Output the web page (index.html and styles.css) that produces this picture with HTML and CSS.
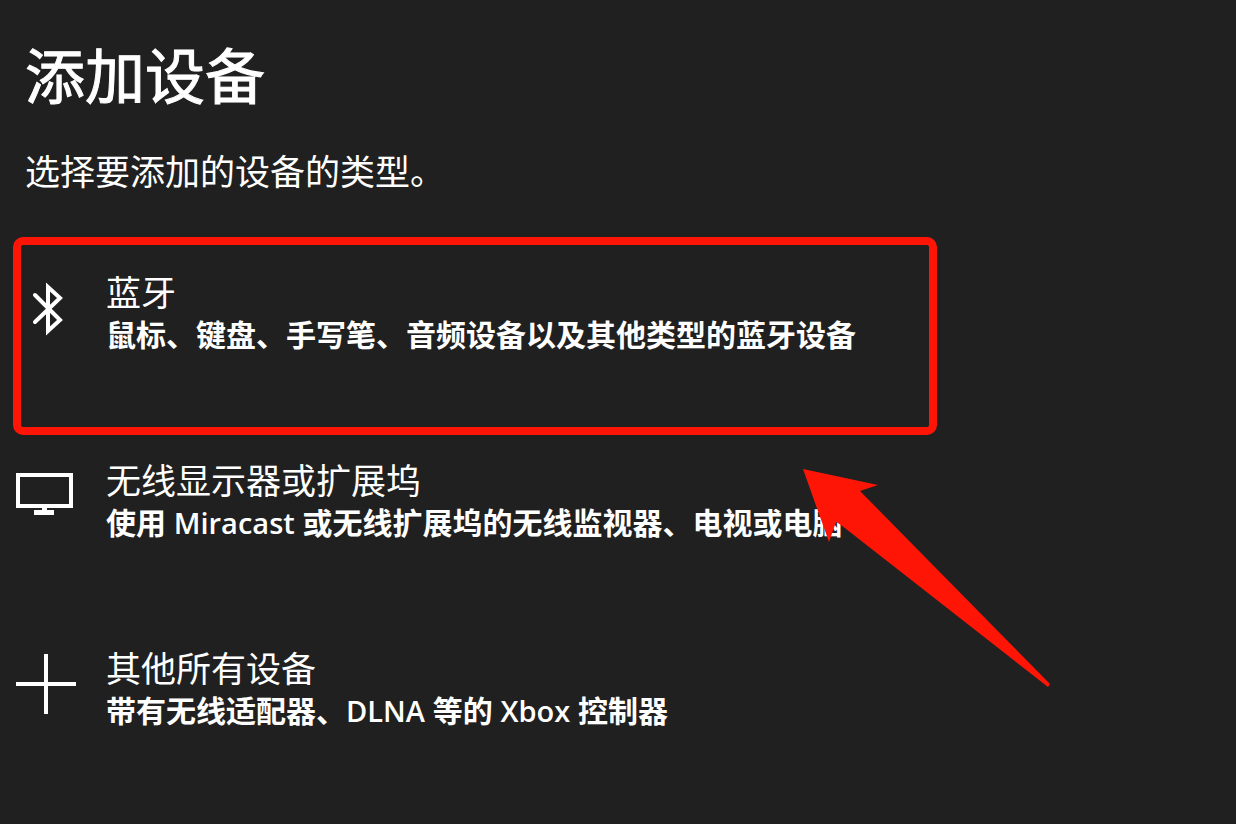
FILE: index.html
```html
<!DOCTYPE html>
<html lang="zh-CN">
<head>
<meta charset="utf-8">
<meta name="viewport" content="width=device-width, initial-scale=1">
<title>添加设备</title>
<link rel="stylesheet" href="styles.css">
</head>
<body>
<main class="dialog">
  <h1 class="dialog-title">添加设备</h1>
  <p class="dialog-lead">选择要添加的设备的类型。</p>
  <div class="device-list">
    <button type="button" class="device device-marked">
      <svg class="device-icon" viewBox="0 0 60 60" aria-hidden="true">
        <path d="M19 17 44 42 32 53V9L44 20 19 44" fill="none" stroke="currentColor" stroke-width="4" stroke-linecap="round"/>
      </svg>
      <span class="device-text">
        <span class="device-name">蓝牙</span>
        <span class="device-desc">鼠标、键盘、手写笔、音频设备以及其他类型的蓝牙设备</span>
      </span>
    </button>
    <button type="button" class="device">
      <svg class="device-icon" viewBox="0 0 60 60" aria-hidden="true">
        <path d="M2 9H55V40H2Z" fill="none" stroke="currentColor" stroke-width="4"/>
        <path d="M26 41h5v3h7v5H18v-5h8z" fill="currentColor"/>
      </svg>
      <span class="device-text">
        <span class="device-name">无线显示器或扩展坞</span>
        <span class="device-desc">使用 <span class="latin">Miracast</span> 或无线扩展坞的无线监视器、电视或电脑</span>
      </span>
    </button>
    <button type="button" class="device">
      <svg class="device-icon" viewBox="0 0 60 60" aria-hidden="true">
        <path d="M30 0V60M0 30H60" fill="none" stroke="currentColor" stroke-width="4"/>
      </svg>
      <span class="device-text">
        <span class="device-name">其他所有设备</span>
        <span class="device-desc">带有无线适配器、<span class="latin">DLNA</span> 等的 <span class="latin">Xbox</span> 控制器</span>
      </span>
    </button>
    <svg class="pointer" viewBox="0 0 248 219" aria-hidden="true">
      <path d="M0 0 75 16 57 22 247 215 245 218 38 56 33 53 26 73Z" fill="currentColor"/>
    </svg>
  </div>
</main>
</body>
</html>
```
FILE: styles.css
```css
* {
  box-sizing: border-box;
}

body {
  margin: 0;
  min-height: 100vh;
  background: #202020;
  color: #fff;
  font-family: "Open Sans", "Noto Sans CJK SC", sans-serif;
}

.dialog {
  padding: 36px 16px 16px;
}

.dialog-title,
.dialog-lead {
  margin: 0;
  padding-left: 9px;
  font-weight: 400;
}

.dialog-title {
  font-size: 60px;
  line-height: 80px;
  -webkit-text-stroke: 1px currentColor;
}

.dialog-lead {
  margin-top: 32px;
  font-size: 35px;
  line-height: 48px;
}

.device-list {
  position: relative;
  display: flex;
  flex-direction: column;
  max-width: 918px;
  margin-top: 46px;
}

.device {
  position: relative;
  display: flex;
  align-items: flex-start;
  gap: 30px;
  min-height: 188px;
  padding: 30px 0;
  border: 0;
  background: transparent;
  color: inherit;
  font-family: inherit;
  text-align: left;
}

.device-marked::after {
  content: "";
  position: absolute;
  inset: -5px -3px;
  border: 8px solid #ff1505;
  border-radius: 10px;
}

.device-icon {
  flex: none;
  width: 60px;
  height: 60px;
  margin-top: 6px;
}

.device-text {
  display: flex;
  flex-direction: column;
}

.device-name {
  font-size: 35px;
  line-height: 42px;
}

.device-desc {
  font-size: 30px;
  font-weight: 600;
  line-height: 42px;
}

.latin {
  font-size: 29px;
}

.pointer {
  position: absolute;
  top: 227px;
  left: 787px;
  width: 248px;
  height: 219px;
  color: #ff1505;
  pointer-events: none;
}
```
